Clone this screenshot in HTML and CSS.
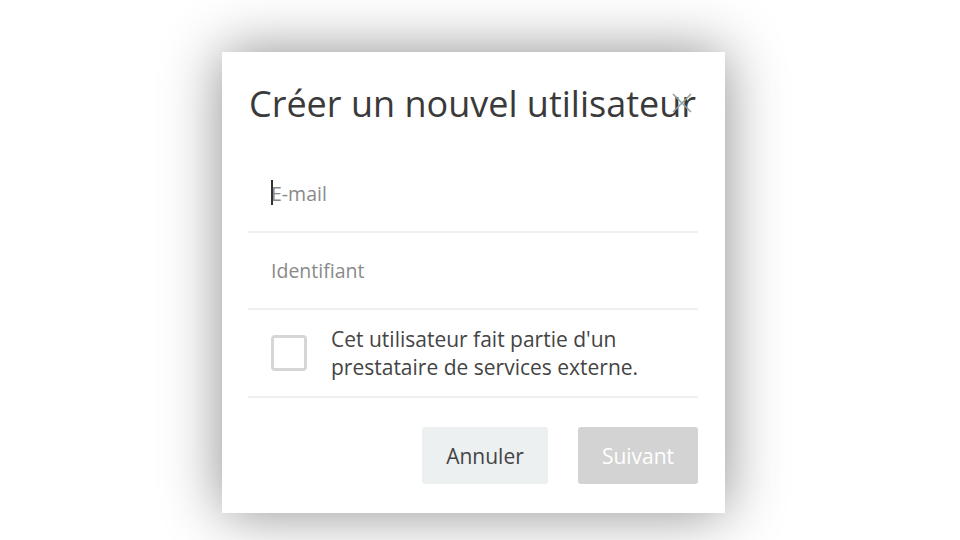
FILE: index.html
```html
<!DOCTYPE html>
<html lang="fr">
<head>
<meta charset="utf-8">
<title>Créer un nouvel utilisateur</title>
<link rel="stylesheet" href="styles.css">
</head>
<body>
<div class="page">
<div class="modal">
  <button class="close" aria-label="Fermer">
    <svg width="22" height="22" viewBox="0 0 22 22"><path d="M2 2 L20 20 M20 2 L2 20" stroke="#8fa3a3" stroke-width="1.6" fill="none"/></svg>
  </button>
  <h1 class="title">Créer un nouvel utilisateur</h1>
  <div class="field"><span class="caret"></span><span class="placeholder">E-mail</span></div>
  <div class="field"><span class="placeholder">Identifiant</span></div>
  <label class="check-row">
    <span class="checkbox"></span>
    <span class="check-text">Cet utilisateur fait partie d'un prestataire de services externe.</span>
  </label>
  <div class="actions">
    <button class="btn btn-cancel">Annuler</button>
    <button class="btn btn-next">Suivant</button>
  </div>
</div>
</div>
</body>
</html>
```
FILE: styles.css
```css
html, body {
  margin: 0;
  padding: 0;
  background: #ffffff;
  font-family: "Open Sans", "Noto Sans", sans-serif;
}
.page {
  height: 540px;
  padding-top: 52px;
  box-sizing: border-box;
  overflow: hidden;
}
.modal {
  position: relative;
  width: 503px;
  box-sizing: border-box;
  margin: 0 0 0 222px;
  padding: 26px 27px 29px 26px;
  background: #ffffff;
  box-shadow: 0 0 55px rgba(0, 0, 0, 0.45);
}
.close {
  position: absolute;
  top: 40px;
  right: 32px;
  width: 22px;
  height: 22px;
  padding: 0;
  border: 0;
  background: transparent;
  display: block;
}
.close svg { display: block; }
.title {
  margin: 0 0 26px 1px;
  font-size: 36px;
  line-height: 52px;
  font-weight: 400;
  color: #3a3a3a;
  white-space: nowrap;
}
.field {
  height: 75px;
  border-bottom: 2px solid #eef1f1;
  display: flex;
  align-items: center;
  padding-left: 23px;
  position: relative;
}
.placeholder {
  font-size: 19.5px;
  color: #8a8a8a;
}
.caret {
  position: absolute;
  left: 23px;
  top: 24px;
  width: 1.5px;
  height: 25px;
  background: #333;
}
.check-row {
  height: 86px;
  border-bottom: 2px solid #eef1f1;
  display: flex;
  align-items: center;
  padding-left: 23px;
  gap: 24px;
}
.checkbox {
  flex: none;
  width: 36px;
  height: 36px;
  box-sizing: border-box;
  border: 3px solid #d6d6d6;
  border-radius: 4px;
}
.check-text {
  font-size: 21px;
  line-height: 28px;
  color: #444;
  width: 340px;
  margin-top: -1px;
}
.actions {
  display: flex;
  justify-content: flex-end;
  gap: 30px;
  margin-top: 29px;
}
.btn {
  height: 57px;
  border: 0;
  border-radius: 3px;
  font-family: "Open Sans", "Noto Sans", sans-serif;
  font-size: 21px;
  padding: 0;
}
.btn-cancel {
  width: 126px;
  background: #edf0f1;
  color: #444;
}
.btn-next {
  width: 120px;
  background: #d3d3d3;
  color: #ffffff;
}
```
